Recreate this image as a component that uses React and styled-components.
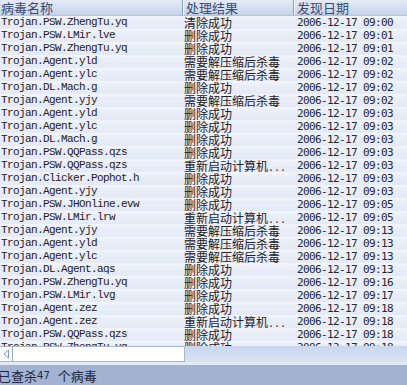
import React from "react";
import styled, { createGlobalStyle } from "styled-components";

const Global = createGlobalStyle`
  html, body { margin: 0; padding: 0; }
  body { width: 407px; height: 385px; overflow: hidden; background: #e9eef8; }
`;

const Frame = styled.div`
  width: 407px;
  height: 385px;
  display: flex;
  flex-direction: column;
  overflow: hidden;
  font-family: "Noto Sans CJK SC", sans-serif;
`;

const Grid = styled.div`
  display: grid;
  grid-template-columns: 182px 111px 1fr;
`;

const Header = styled(Grid)`
  height: 16px;
  flex: none;
  background: linear-gradient(to bottom, #e4ebf7 0%, #d4def0 55%, #c4d2ea 100%);
  box-sizing: border-box;
  border-bottom: 1px solid #b3c3de;
`;

const HeadCell = styled.div`
  font-size: 13px;
  line-height: 15px;
  color: #3a4c70;
  padding-left: ${(p) => (p.$first ? "1px" : "3px")};
  white-space: nowrap;
  border-left: ${(p) => (p.$first ? "none" : "1px solid #8e9fbe")};
  box-shadow: ${(p) => (p.$first ? "none" : "inset 1px 0 0 #f4f7fc")};
`;

const Body = styled.div`
  height: 330px;
  flex: none;
  overflow: hidden;
  background: #e9eef8;
`;

const Row = styled(Grid)`
  height: 13px;
  background: linear-gradient(to bottom, #f3f6fc 0%, #e9eef8 30%, #e4eaf6 100%);
  color: #1e2026;
`;

const NameCell = styled.div`
  font-family: "Liberation Mono", monospace;
  font-size: 11px;
  letter-spacing: -0.6px;
  line-height: 13px;
  padding-left: 1px;
  white-space: nowrap;
`;

const ResultCell = styled.div`
  font-family: "Noto Sans CJK SC", sans-serif;
  font-size: 12px;
  line-height: 13px;
  padding-left: 2px;
  white-space: nowrap;
`;

const Dots = styled.span`
  font-family: "Liberation Mono", monospace;
  font-size: 10px;
`;

const DateCell = styled.div`
  font-family: "DejaVu Sans Mono", monospace;
  font-size: 11px;
  letter-spacing: -0.62px;
  line-height: 13px;
  padding-left: 4px;
  white-space: nowrap;
  color: #25282f;
`;

const HScroll = styled.div`
  height: 16px;
  flex: none;
  display: flex;
  background: linear-gradient(to bottom, #c9d6ee, #d9e3f4);
`;

const Track = styled.div`
  width: 185px;
  box-sizing: border-box;
  display: flex;
  background: #ffffff;
  border: 1px solid #a9b6cc;
  border-left: none;
`;

const ArrowBtn = styled.div`
  width: 12px;
  flex: none;
  display: flex;
  align-items: center;
  justify-content: center;
  border-right: 1px solid #9aa6bc;
  background: #fafbfd;
`;

const Band = styled.div`
  height: 3px;
  flex: none;
  background: #e3eaf7;
`;

const Status = styled.div`
  flex: 1;
  background: #a2b2d0;
  display: flex;
  align-items: center;
  margin-left: -2px;
  font-size: 13px;
  color: #1d2640;
  white-space: nowrap;
`;

const Num = styled.span`
  font-family: "DejaVu Sans", sans-serif;
  font-size: 10px;
  margin-right: 8px;
`;

const rows = [
  ["Trojan.PSW.ZhengTu.yq", "清除成功", "09:00"],
  ["Trojan.PSW.LMir.lve", "删除成功", "09:01"],
  ["Trojan.PSW.ZhengTu.yq", "删除成功", "09:01"],
  ["Trojan.Agent.yld", "需要解压缩后杀毒", "09:02"],
  ["Trojan.Agent.ylc", "需要解压缩后杀毒", "09:02"],
  ["Trojan.DL.Mach.g", "删除成功", "09:02"],
  ["Trojan.Agent.yjy", "需要解压缩后杀毒", "09:02"],
  ["Trojan.Agent.yld", "删除成功", "09:03"],
  ["Trojan.Agent.ylc", "删除成功", "09:03"],
  ["Trojan.DL.Mach.g", "删除成功", "09:03"],
  ["Trojan.PSW.QQPass.qzs", "删除成功", "09:03"],
  ["Trojan.PSW.QQPass.qzs", "重新启动计算机", "09:03", true],
  ["Trojan.Clicker.Pophot.h", "删除成功", "09:03"],
  ["Trojan.Agent.yjy", "删除成功", "09:03"],
  ["Trojan.PSW.JHOnline.evw", "删除成功", "09:05"],
  ["Trojan.PSW.LMir.lrw", "重新启动计算机", "09:05", true],
  ["Trojan.Agent.yjy", "需要解压缩后杀毒", "09:13"],
  ["Trojan.Agent.yld", "需要解压缩后杀毒", "09:13"],
  ["Trojan.Agent.ylc", "需要解压缩后杀毒", "09:13"],
  ["Trojan.DL.Agent.aqs", "删除成功", "09:13"],
  ["Trojan.PSW.ZhengTu.yq", "删除成功", "09:16"],
  ["Trojan.PSW.LMir.lvg", "删除成功", "09:17"],
  ["Trojan.Agent.zez", "删除成功", "09:18"],
  ["Trojan.Agent.zez", "重新启动计算机", "09:18", true],
  ["Trojan.PSW.QQPass.qzs", "删除成功", "09:18"],
  ["Trojan.PSW.ZhengTu.yq", "删除成功", "09:18"],
];

export default function App() {
  return (
    <Frame>
      <Global />
      <Header>
        <HeadCell $first>病毒名称</HeadCell>
        <HeadCell>处理结果</HeadCell>
        <HeadCell>发现日期</HeadCell>
      </Header>
      <Body>
        {rows.map(([name, result, time, more], i) => (
          <Row key={i}>
            <NameCell>{name}</NameCell>
            <ResultCell>
              {result}
              {more && <Dots>...</Dots>}
            </ResultCell>
            <DateCell>2006-12-17 {time}</DateCell>
          </Row>
        ))}
      </Body>
      <HScroll>
        <Track>
          <ArrowBtn>
            <svg width="7" height="10" viewBox="0 0 7 10">
              <path d="M5.5 1 L1 5 L5.5 9 Z" fill="none" stroke="#8c98ad" strokeWidth="1" />
            </svg>
          </ArrowBtn>
        </Track>
      </HScroll>
      <Band />
      <Status>
        已查杀<Num>47</Num>个病毒
      </Status>
    </Frame>
  );
}
